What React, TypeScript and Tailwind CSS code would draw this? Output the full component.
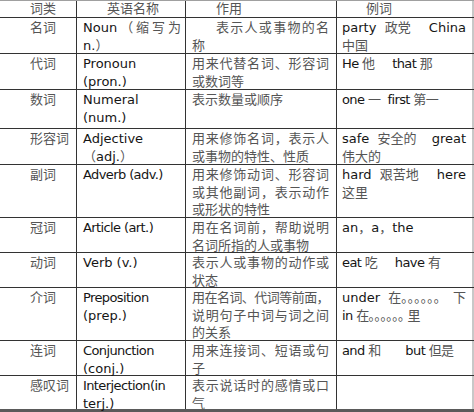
import clsx from 'clsx';

// split text into CJK / latin runs so the chinese glyphs get the lighter grey
const CJK = /([\u2e80-\u9fff\u3000-\u303f\uff00-\uffef]+)/;

const Txt = ({ s }: { s: string }) => (
  <>
    {s.split(CJK).map((p, i) =>
      CJK.test(p) ? (
        <span key={i} className="text-[#555]">
          {p}
        </span>
      ) : (
        p
      ),
    )}
  </>
);

const Lines = ({ lines, indent, words }: { lines: string[]; indent?: boolean; words?: boolean }) => (
  <>
    {lines.map((l, i) => {
      const last = i === lines.length - 1;
      // example column: spread at '|' only, keep chinese chars together
      if (words && !last) {
        return (
          <div key={i} className="flex justify-between whitespace-pre">
            {l.split('|').map((w, k) => (
              <span key={k}>
                <Txt s={w} />
              </span>
            ))}
          </div>
        );
      }
      return (
        <div
          key={i}
          className={clsx(
            !last ? 'whitespace-nowrap text-justify [text-align-last:justify]' : 'whitespace-pre',
            i === 0 && indent && 'pl-[24px]',
            l.length > 10 && 'tracking-[-0.6px]',
          )}
        >
          <Txt s={l} />
        </div>
      );
    })}
  </>
);

type Row = { h: string; a: string; b: string[]; c: string[]; d: string[]; ci?: boolean };

// DEMO DATA
const ROWS: Row[] = [
  { h: 'h-[36px]', a: '名词', b: ['Noun（缩写为', 'n.）'], c: ['表示人或事物的名', '称'], d: ['party  政党|China', '中国'], ci: true },
  { h: 'h-[36px]', a: '代词', b: ['Pronoun', '(pron.)'], c: ['用来代替名词、形容词', '或数词等'], d: ['He 他     that 那'] },
  { h: 'h-[39px]', a: '数词', b: ['Numeral', '(num.)'], c: ['表示数量或顺序'], d: ['one 一  first 第一'] },
  { h: 'h-[36px]', a: '形容词', b: ['Adjective', '（adj.）'], c: ['用来修饰名词，表示人', '或事物的特性、性质'], d: ['safe  安全的|great', '伟大的'] },
  { h: 'h-[53px]', a: '副词', b: ['Adverb (adv.)'], c: ['用来修饰动词、形容词', '或其他副词，表示动作', '或形状的特性'], d: ['hard  艰苦地|here', '这里'] },
  { h: 'h-[35px]', a: '冠词', b: ['Article (art.)'], c: ['用在名词前，帮助说明', '名词所指的人或事物'], d: ['an，a，the'] },
  { h: 'h-[35px]', a: '动词', b: ['Verb (v.)'], c: ['表示人或事物的动作或', '状态'], d: ['eat 吃     have 有'] },
  { h: 'h-[53px]', a: '介词', b: ['Preposition', '(prep.)'], c: ['用在名词、代词等前面，', '说明句子中词与词之间', '的关系'], d: ['under  在｡｡｡｡｡｡|下', 'in 在｡｡｡｡｡｡ 里'] },
  { h: 'h-[35px]', a: '连词', b: ['Conjunction', '(conj.)'], c: ['用来连接词、短语或句', '子'], d: ['and 和       but 但是'] },
  { h: 'h-[36px]', a: '感叹词', b: ['Interjection(in', 'terj.)'], c: ['表示说话时的感情或口', '气'], d: [] },
];

export default function App() {
  return (
    <div className="w-[474px] h-[412px] bg-white font-['DejaVu_Sans','Noto_Sans_CJK_SC',sans-serif] text-[13px] leading-[17.5px] text-[#151515]">
      {/* header */}
      <div className="flex h-[18px] border-t border-b border-t-[#a0a0a0] border-b-[#333] leading-[16px]">
        <div className="w-[77px] shrink-0 border-r border-[#333] pl-[30px] text-[#555]">词类</div>
        <div className="w-[109px] shrink-0 border-r border-[#333] pl-[30px] text-[#555]">英语名称</div>
        <div className="w-[151px] shrink-0 border-r border-[#333] pl-[30px] text-[#555]">作用</div>
        <div className="flex-1 border-r-2 border-[#c8c8c8] pl-[29px] text-[#555]">例词</div>
      </div>

      {ROWS.map((r, idx) => (
        <div
          key={r.a}
          className={clsx(
            'flex',
            r.h,
            idx === ROWS.length - 1 ? 'border-b-[3px] border-[#5a5a5a]' : 'border-b border-[#333]',
          )}
        >
          <div className="w-[77px] shrink-0 border-r border-[#333] pl-[30px] pt-[1px] text-[#555]">{r.a}</div>
          <div className="w-[109px] shrink-0 border-r border-[#333] pl-[6px] pr-[4px] pt-[1px]">
            <Lines lines={r.b} />
          </div>
          <div className="w-[151px] shrink-0 border-r border-[#333] pl-[6px] pr-[7px] pt-[1px]">
            <Lines lines={r.c} indent={r.ci} />
          </div>
          <div className="min-w-0 flex-1 border-r-2 border-[#c8c8c8] pl-[5px] pr-[6px] pt-[1px]">
            <Lines lines={r.d} words />
          </div>
        </div>
      ))}
    </div>
  );
}
